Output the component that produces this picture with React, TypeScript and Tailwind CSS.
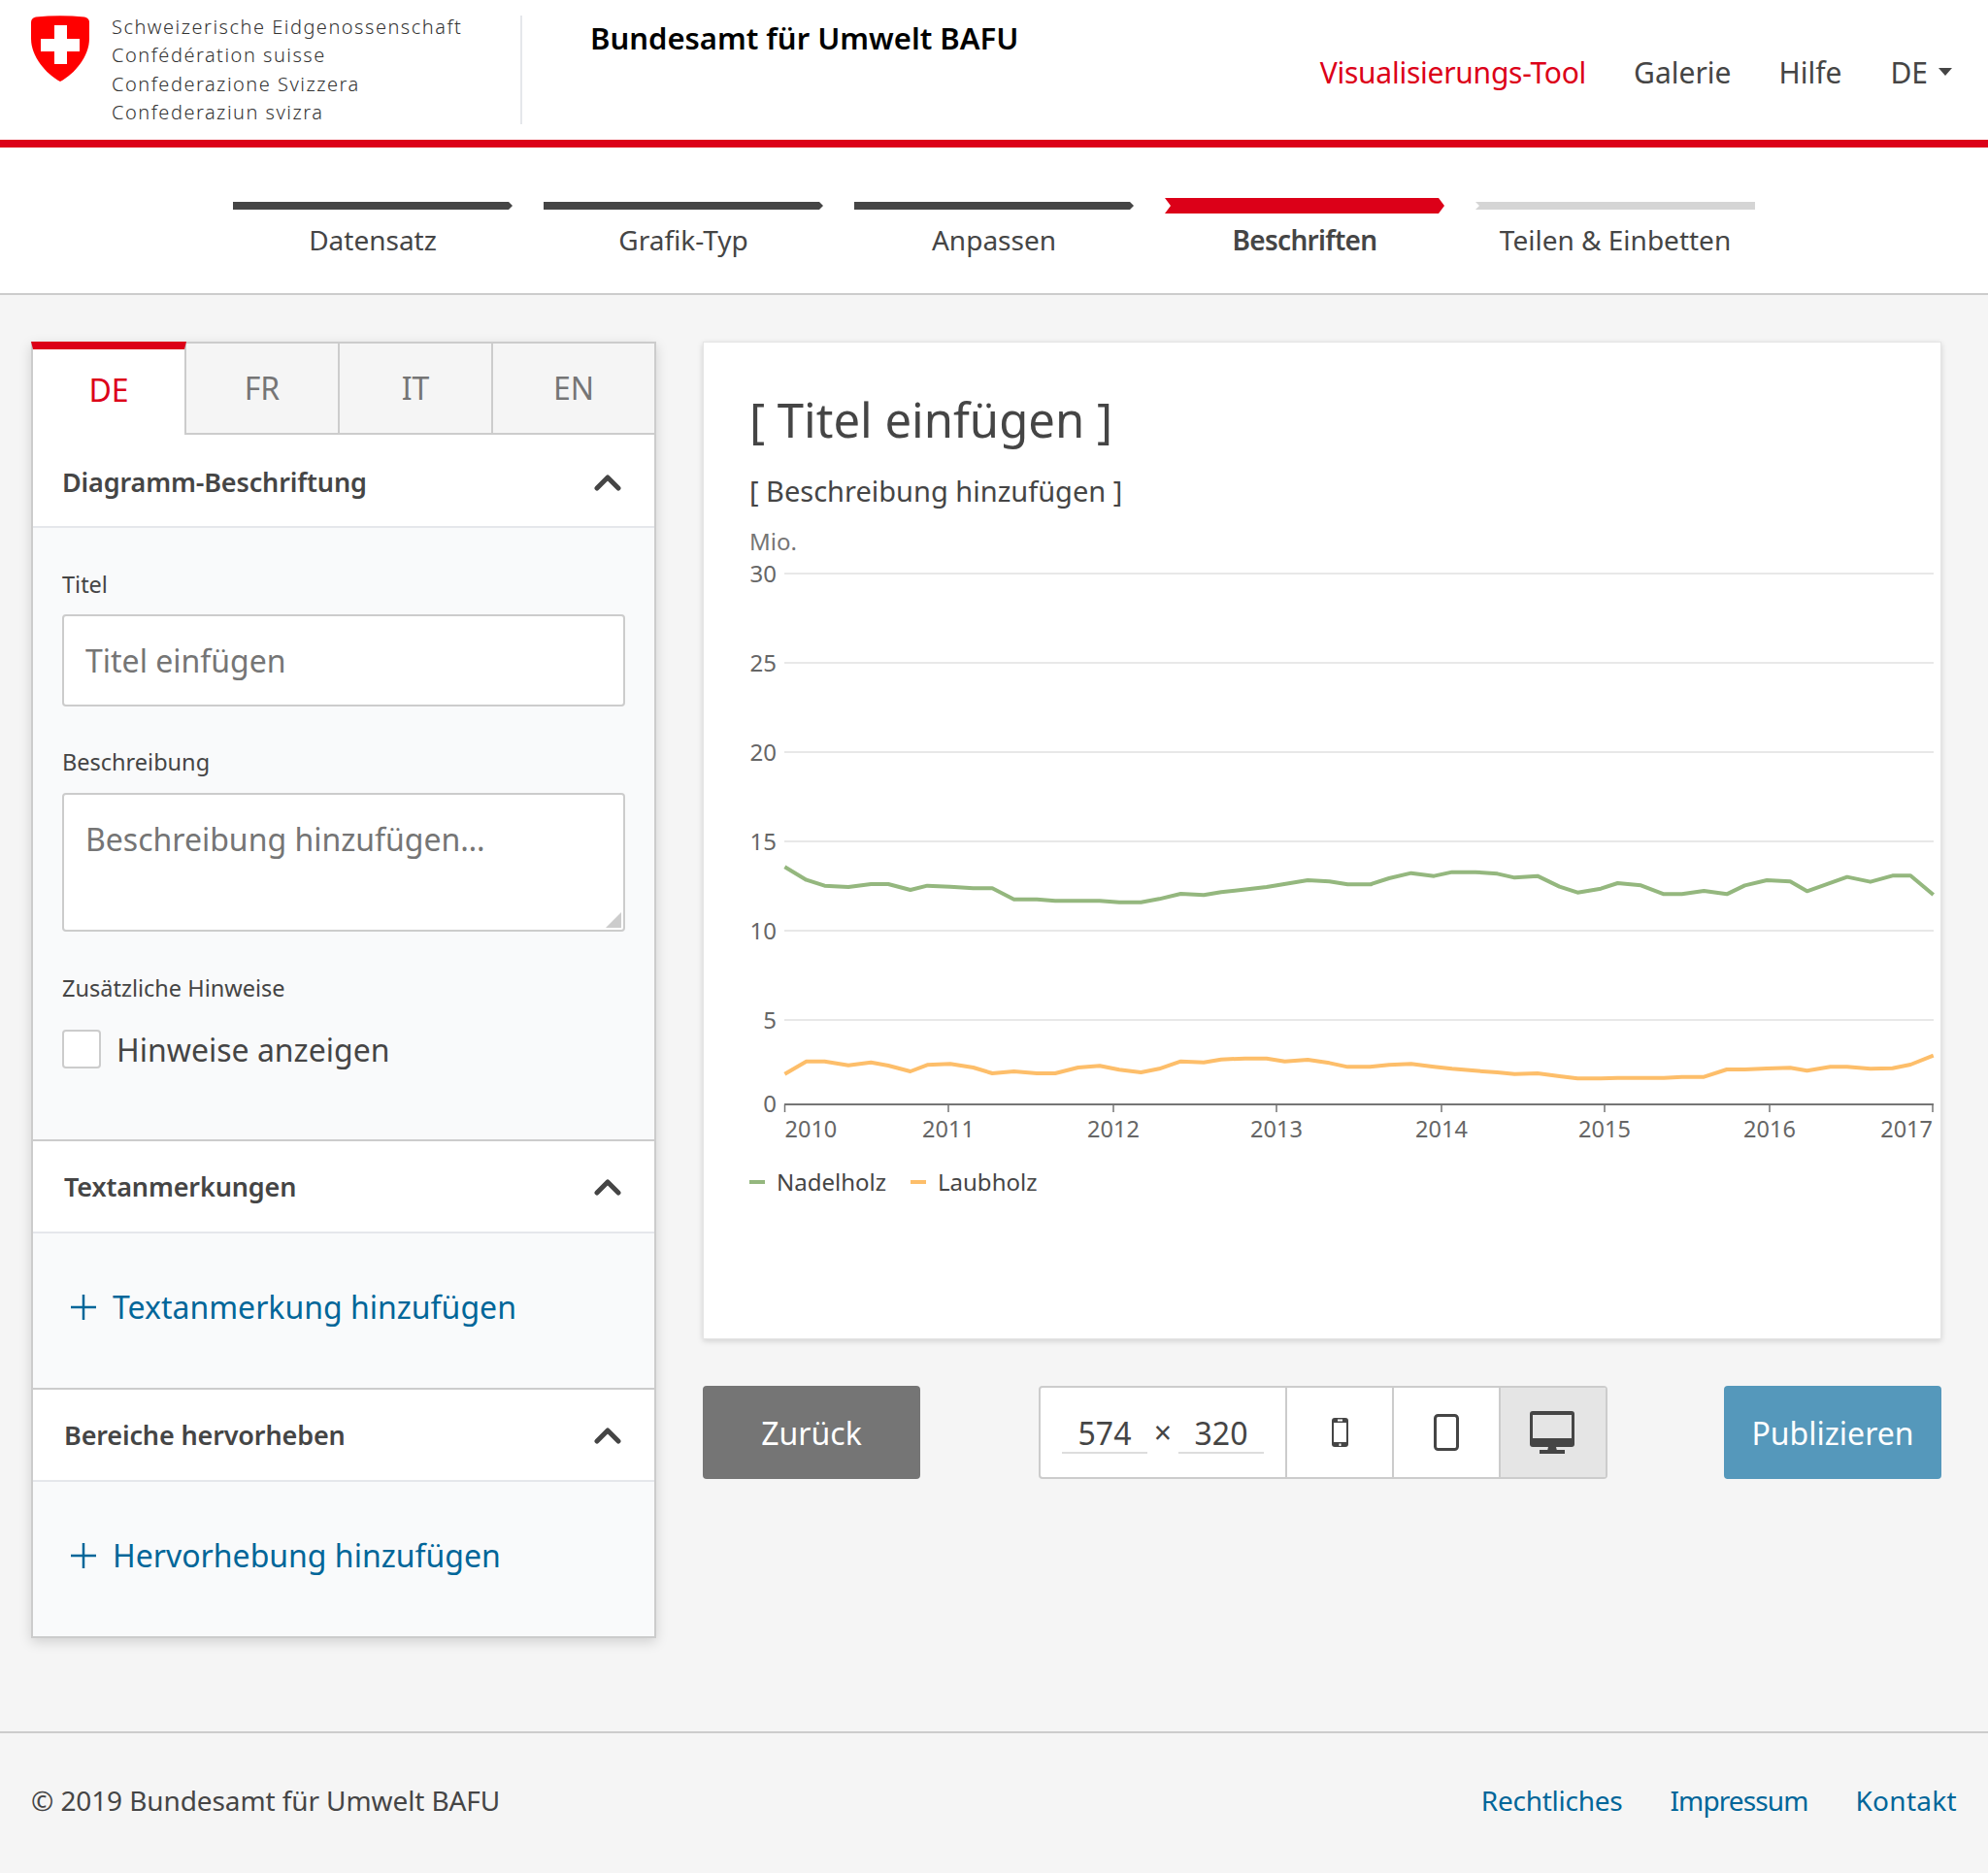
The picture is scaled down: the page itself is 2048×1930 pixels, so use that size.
import React from 'react';

const STEPS = [
  { label: 'Datensatz', bar: 'h-2 bg-[#454545] [clip-path:polygon(0_0,calc(100%-4px)_0,100%_50%,calc(100%-4px)_100%,0_100%)]' },
  { label: 'Grafik-Typ', bar: 'h-2 bg-[#454545] [clip-path:polygon(0_0,calc(100%-4px)_0,100%_50%,calc(100%-4px)_100%,0_100%)]' },
  { label: 'Anpassen', bar: 'h-2 bg-[#454545] [clip-path:polygon(0_0,calc(100%-4px)_0,100%_50%,calc(100%-4px)_100%,0_100%)]' },
  { label: 'Beschriften', active: true, bar: 'h-4 bg-[#dc0018] [clip-path:polygon(0_0,calc(100%-6px)_0,100%_50%,calc(100%-6px)_100%,0_100%,6px_50%)]' },
  { label: 'Teilen & Einbetten', bar: 'h-2 bg-[#d5d5d5] [clip-path:polygon(0_0,100%_0,100%_100%,0_100%,4px_50%)]' },
];

// traced from the chart, [x, y] in two halves with different scales
const toLeft = ([x, y]: number[]) => `${720 + x / 2.24},${840 + y / 3}`;
const toRight = ([x, y]: number[]) => `${1400 + x / 2.42},${840 + y / 3}`;

const GREEN_L = [[198,160],[248,200],[290,218],[345,222],[397,213],[437,213],[488,231],[527,218],[580,221],[633,226],[677,226],[727,260],[780,260],[822,265],[925,265],[970,269],[1020,269],[1062,259],[1112,243],[1165,247],[1205,238],[1310,222],[1405,201],[1455,205],[1497,214],[1552,214]];
const GREEN_R = [[27,214],[75,195],[130,179],[187,188],[232,176],[290,176],[345,181],[388,193],[445,188],[500,221],[545,239],[603,227],[645,210],[703,217],[760,244],[805,244],[860,234],[917,244],[962,217],[1017,201],[1075,205],[1117,235],[1217,191],[1275,206],[1330,187],[1375,187],[1432,246]];
const ORANGE_L = [[198,800],[248,761],[290,761],[345,773],[397,764],[437,774],[488,792],[527,772],[580,769],[633,780],[677,798],[727,792],[780,798],[822,798],[875,780],[925,775],[970,787],[1020,795],[1062,784],[1112,761],[1165,764],[1205,755],[1260,752],[1310,752],[1352,761],[1405,756],[1455,766],[1497,778],[1552,778]];
const ORANGE_R = [[27,778],[75,772],[130,769],[187,778],[232,784],[290,790],[345,795],[388,800],[445,798],[500,807],[545,814],[603,814],[645,812],[760,812],[805,809],[860,809],[917,786],[962,786],[1017,783],[1075,781],[1117,790],[1175,778],[1217,778],[1275,784],[1330,782],[1375,771],[1432,743]];

const GRID = [
  { label: '30', y: 591 },
  { label: '25', y: 683 },
  { label: '20', y: 775 },
  { label: '15', y: 867 },
  { label: '10', y: 959 },
  { label: '5', y: 1051 },
];

const YEARS = [
  { label: '2010', x: 808.5, anchor: 'start' },
  { label: '2011', x: 977, anchor: 'middle' },
  { label: '2012', x: 1147, anchor: 'middle' },
  { label: '2013', x: 1315, anchor: 'middle' },
  { label: '2014', x: 1485, anchor: 'middle' },
  { label: '2015', x: 1653, anchor: 'middle' },
  { label: '2016', x: 1823, anchor: 'middle' },
  { label: '2017', x: 1991, anchor: 'end' },
];

function Shield() {
  return (
    <svg width="60" height="68" viewBox="0 0 60 68" className="shrink-0">
      <path d="M5 1.5Q30 -1 55 1.5Q60 2.5 60 7V24C60 42 45 60 30 68C15 60 0 42 0 24V7Q0 2.5 5 1.5Z" fill="#ff0000" />
      <path d="M24 10H37V24H50V37H37V50H24V37H10V24H24Z" fill="#fff" />
    </svg>
  );
}

function Chevron() {
  return (
    <svg width="28" height="18" viewBox="0 0 28 18" className="shrink-0">
      <polyline points="3,15 14,4 25,15" fill="none" stroke="#454545" strokeWidth="5" strokeLinecap="round" strokeLinejoin="round" />
    </svg>
  );
}

function SectionHead({ title, top }: { title: string; top?: boolean }) {
  return (
    <div className={`flex items-center justify-between bg-white pr-[34px] border-b-2 border-[#e5e7eb] ${top ? 'h-24 pl-[30px] pt-1' : 'h-[97px] pl-8 border-t-2 border-t-[#ccc]'}`}>
      <span className="text-[27px] tracking-[-0.15px] leading-9 font-semibold text-[#454545]">{title}</span>
      <Chevron />
    </div>
  );
}

function AddLink({ label }: { label: string }) {
  return (
    <div className="flex items-center gap-[17px] pl-[39px] text-[32px] leading-10 text-[#006699]">
      <svg width="26" height="26" viewBox="0 0 26 26" className="shrink-0">
        <path d="M13 0V26M0 13H26" stroke="#006699" strokeWidth="2.5" fill="none" />
      </svg>
      <span>{label}</span>
    </div>
  );
}

function Chart() {
  return (
    <svg width="1224" height="700" viewBox="772 540 1224 700" className="block mt-[10px]" fontFamily="'Noto Sans', sans-serif">
      <text x="772" y="567" fontSize="24" fill="#757575">Mio.</text>
      {GRID.map(g => (
        <g key={g.label}>
          <line x1="808" x2="1992" y1={g.y} y2={g.y} stroke="#e8e8e8" strokeWidth="2" />
          <text x="800" y={g.y + 9} fontSize="24" fill="#666" textAnchor="end">{g.label}</text>
        </g>
      ))}
      <text x="800" y="1146" fontSize="24" fill="#666" textAnchor="end">0</text>
      <polyline points={[...GREEN_L.map(toLeft), ...GREEN_R.map(toRight)].join(' ')} fill="none" stroke="#94b77e" strokeWidth="4" strokeLinejoin="round" />
      <polyline points={[...ORANGE_L.map(toLeft), ...ORANGE_R.map(toRight)].join(' ')} fill="none" stroke="#fdbe6a" strokeWidth="4" strokeLinejoin="round" />
      <line x1="808" x2="1992" y1="1138" y2="1138" stroke="#757575" strokeWidth="2" />
      {YEARS.map(t => (
        <g key={t.label}>
          <line x1={t.x} x2={t.x} y1="1138" y2="1146" stroke="#757575" strokeWidth="1.5" />
          <text x={t.x} y="1172" fontSize="23.5" fill="#666" textAnchor={t.anchor as 'start' | 'middle' | 'end'}>{t.label}</text>
        </g>
      ))}
      <rect x="772" y="1216" width="16" height="4" fill="#94b77e" />
      <text x="800" y="1227" fontSize="24" fill="#454545">Nadelholz</text>
      <rect x="938" y="1216" width="16" height="4" fill="#fdbe6a" />
      <text x="966" y="1227" fontSize="24" fill="#454545">Laubholz</text>
    </svg>
  );
}

export default function App() {
  return (
    <div className="w-[2048px] h-[1930px] bg-[#f5f5f5] text-[#454545] font-['Noto_Sans',sans-serif] flex flex-col">
      {/* Header */}
      <header className="h-[152px] shrink-0 bg-white border-b-8 border-[#dc0018] flex items-start justify-between">
        <div className="flex items-start pl-8 pt-4">
          <Shield />
          <div className="ml-[23px] -mt-[3px] text-[20px] leading-[29.4px] tracking-[1.5px] font-light text-[#333] w-[421px]">
            <div>Schweizerische Eidgenossenschaft</div>
            <div>Confédération suisse</div>
            <div>Confederazione Svizzera</div>
            <div>Confederaziun svizra</div>
          </div>
          <div className="w-0.5 h-28 bg-[#e5e7eb]" />
          <div className="ml-[70px] text-[31px] leading-[46px] font-semibold text-black">Bundesamt für Umwelt BAFU</div>
        </div>
        <nav className="flex items-center pt-[53px] pr-[37px] text-[30px] leading-11 text-[#454545]">
          <span className="text-[#dc0018] tracking-[-0.25px]">Visualisierungs-Tool</span>
          <span className="ml-[49px]">Galerie</span>
          <span className="ml-[49px]">Hilfe</span>
          <span className="ml-[50px]">DE</span>
          <span className="ml-[11px] -mt-[2px] w-0 h-0 border-x-[7px] border-x-transparent border-t-8 border-t-[#454545]" />
        </nav>
      </header>

      {/* Steps */}
      <div className="h-[152px] shrink-0 bg-white border-b-2 border-[#ccc] flex justify-center gap-8 pt-[52px]">
        {STEPS.map(s => (
          <div key={s.label} className="w-72 text-center">
            <div className="h-4 flex items-center">
              <div className={`w-full ${s.bar}`} />
            </div>
            <div className={`mt-[9px] text-[28px] leading-9 ${s.active ? 'font-semibold tracking-[-0.7px]' : ''}`}>{s.label}</div>
          </div>
        ))}
      </div>

      <main className="flex-1 flex items-start pt-12 pl-8 pr-12">
        {/* Left panel */}
        <div className="w-[644px] shrink-0 border-2 border-[#ccc] bg-[#f9fafb] shadow-[0_4px_12px_rgba(0,0,0,0.15)]">
          <div className="flex h-[94px] bg-white">
            <div className="relative z-10 w-[160px] -ml-0.5 -mr-0.5 -mt-0.5 h-[96px] border-t-8 border-x-2 border-t-[#dc0018] border-x-[#ccc] bg-white flex items-center justify-center text-[32px] text-[#dc0018] pb-1">DE</div>
            <div className="w-[158px] border-l-2 border-b-2 border-[#ccc] bg-[#f5f5f5] flex items-center justify-center text-[32px] text-[#757575]">FR</div>
            <div className="w-[158px] border-l-2 border-b-2 border-[#ccc] bg-[#f5f5f5] flex items-center justify-center text-[32px] text-[#757575]">IT</div>
            <div className="flex-1 border-l-2 border-b-2 border-[#ccc] bg-[#f5f5f5] flex items-center justify-center text-[32px] text-[#757575]">EN</div>
          </div>

          <SectionHead title="Diagramm-Beschriftung" top />
          <div className="h-[630px] px-[30px] pt-[42px]">
            <div className="text-[23.5px] leading-8 text-[#454545]">Titel</div>
            <input
              placeholder="Titel einfügen"
              className="mt-[15px] w-[580px] h-[95px] block bg-white border-2 border-[#ccc] rounded px-[22px] text-[32px] outline-none placeholder:text-[#757575]"
            />
            <div className="mt-[41px] text-[23.5px] leading-8">Beschreibung</div>
            <div className="relative mt-[16px] w-[580px] h-[143px]">
              <textarea
                placeholder="Beschreibung hinzufügen…"
                className="w-full h-full block resize-none bg-white border-2 border-[#ccc] rounded px-[22px] pt-[23px] text-[32px] leading-[46px] outline-none placeholder:text-[#757575]"
              />
              <svg width="16" height="16" viewBox="0 0 16 16" className="absolute right-[4px] bottom-[4px]">
                <polygon points="16,0 16,16 0,16" fill="#ccc" />
              </svg>
            </div>
            <div className="mt-[42px] text-[23.5px] leading-8">Zusätzliche Hinweise</div>
            <div className="mt-[26px] flex items-center gap-4">
              <span className="w-10 h-10 bg-white border-2 border-[#ccc] rounded" />
              <span className="text-[32px] leading-10 pt-0.5">Hinweise anzeigen</span>
            </div>
          </div>

          <SectionHead title="Textanmerkungen" />
          <div className="h-[159px] pt-[56px]">
            <AddLink label="Textanmerkung hinzufügen" />
          </div>

          <SectionHead title="Bereiche hervorheben" />
          <div className="h-[159px] pt-[56px]">
            <AddLink label="Hervorhebung hinzufügen" />
          </div>
        </div>

        {/* Right column */}
        <div className="ml-12 w-[1276px]">
          <div className="h-[1028px] bg-white border border-[#e5e5e5] shadow-[0_2px_6px_rgba(0,0,0,0.15)] pl-[47px] pt-[49px]">
            <h1 className="text-[49px] leading-[60px] text-[#454545]">[ Titel einfügen ]</h1>
            <p className="mt-[22px] text-[29px] leading-[44px] text-[#454545]">[ Beschreibung hinzufügen ]</p>
            <div className="pt-0.5">
              <Chart />
            </div>
          </div>

          <div className="mt-12 flex items-center justify-between">
            <div className="w-56 h-24 pt-0.5 bg-[#757575] rounded flex items-center justify-center text-[32px] text-white">Zurück</div>
            <div className="flex h-24 w-[586px] ml-[122px] border-2 border-[#ccc] rounded bg-white">
              <div className="w-[252px] flex items-center pl-[22px] text-[32px] text-[#454545]">
                <input defaultValue="574" readOnly className="w-[88px] h-10 mt-[3px] text-center border-b-2 border-[#ddd] outline-none" />
                <span className="w-8 text-center">×</span>
                <input defaultValue="320" readOnly className="w-[88px] h-10 mt-[3px] text-center border-b-2 border-[#ddd] outline-none" />
              </div>
              <div className="w-[110px] border-l-2 border-[#ccc] flex items-center justify-center">
                <svg width="17" height="30" viewBox="0 0 17 30">
                  <rect width="17" height="30" rx="3" fill="#454545" />
                  <rect x="2" y="5" width="13" height="20" fill="#fff" />
                  <rect x="6" y="1.5" width="5" height="2" fill="#fff" />
                  <rect x="7.5" y="26.5" width="2" height="2.5" fill="#fff" />
                </svg>
              </div>
              <div className="w-[110px] border-l-2 border-[#ccc] flex items-center justify-center">
                <svg width="26" height="38" viewBox="0 0 26 38">
                  <rect x="1.5" y="1.5" width="23" height="35" rx="3" fill="#fff" stroke="#454545" strokeWidth="3" />
                </svg>
              </div>
              <div className="flex-1 border-l-2 border-[#ccc] bg-[#e5e5e5] flex items-center justify-center pr-0.5">
                <svg width="46" height="44" viewBox="0 0 46 44">
                  <rect width="46" height="37" rx="3" fill="#454545" />
                  <rect x="3" y="4" width="40" height="24" fill="#e5e5e5" />
                  <polygon points="19,37 27,37 28,41 18,41" fill="#454545" />
                  <rect x="10" y="40" width="26" height="4" fill="#454545" />
                </svg>
              </div>
            </div>
            <div className="ml-auto w-56 h-24 pt-0.5 bg-[#5598bb] rounded flex items-center justify-center text-[32px] text-white">Publizieren</div>
          </div>
        </div>
      </main>

      {/* Footer */}
      <footer className="h-[146px] shrink-0 border-t-2 border-[#ccc] flex items-center justify-between pl-8 pr-8 pb-[6px] text-[28px] tracking-[-0.1px] leading-9">
        <span>© 2019 Bundesamt für Umwelt BAFU</span>
        <div className="flex gap-[49px] text-[#006699]">
          <span className="tracking-[-0.25px]">Rechtliches</span>
          <span className="tracking-[-0.9px]">Impressum</span>
          <span className="tracking-[0.3px]">Kontakt</span>
        </div>
      </footer>
    </div>
  );
}
